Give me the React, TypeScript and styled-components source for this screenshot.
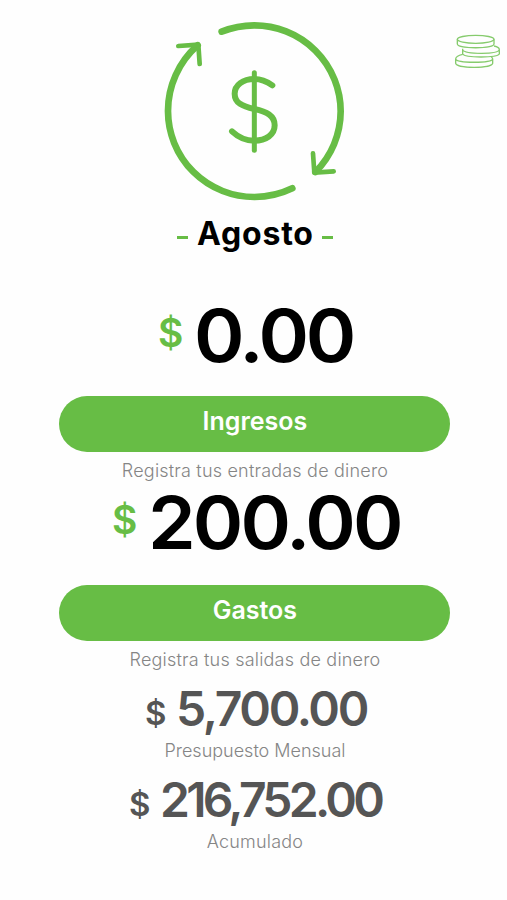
import React from "react";
import styled, { createGlobalStyle } from "styled-components";

const GREEN = "#67bd45";

const GlobalStyle = createGlobalStyle`
  * { box-sizing: border-box; }
  body {
    margin: 0;
    background: #fefefe;
    font-family: Inter, "Liberation Sans", sans-serif;
  }
`;

const Screen = styled.main`
  width: 507px;
  height: 900px;
  overflow: hidden;
  display: flex;
  flex-direction: column;
`;

const Header = styled.header`
  height: 210px;
  display: grid;
  grid-template-columns: 210px 67px;
  column-gap: 80px;
  padding: 10px 0 0 150px;
`;

const CycleIcon = styled.svg`
  width: 210px;
  height: 200px;
  fill: none;
  stroke: ${GREEN};
  stroke-linecap: round;
  stroke-linejoin: round;
`;

const CoinsIcon = styled.svg`
  width: 67px;
  height: 60px;
  margin-top: 10px;
  fill: none;
  stroke: #86cb6d;
  stroke-width: 4;
`;

const Month = styled.h1`
  margin: 0;
  height: 48px;
  padding: 0 0 0 3px;
  display: flex;
  justify-content: center;
  align-items: center;
  gap: 9px;
  font-size: 32px;
  font-weight: 700;
  line-height: 48px;
`;

const MonthName = styled.span`
  letter-spacing: 0.8px;
  margin-right: -0.8px;
`;

const Dash = styled.span`
  width: 11px;
  height: 3px;
  margin-top: 7px;
  background: ${GREEN};
`;

const Amount = styled.div<{ $small?: boolean; $top: number; $left: number }>`
  height: ${(p) => (p.$small ? 56 : 80)}px;
  margin-top: ${(p) => p.$top}px;
  padding-left: ${(p) => p.$left}px;
  display: flex;
  align-items: center;
  color: ${(p) => (p.$small ? "#555" : "#000")};
`;

const Currency = styled.span<{ $small?: boolean }>`
  width: ${(p) => (p.$small ? 31 : 36)}px;
  color: ${(p) => (p.$small ? "#555" : GREEN)};
  font-size: ${(p) => (p.$small ? 33 : 39)}px;
  font-weight: 600;
  line-height: 1;
  margin-left: -1px;
  margin-top: ${(p) => (p.$small ? 7 : -8)}px;
`;

const Value = styled.span<{ $small?: boolean; $spacing: number }>`
  font-size: ${(p) => (p.$small ? 48 : 73)}px;
  font-weight: 600;
  line-height: 0.8;
  white-space: nowrap;
  letter-spacing: ${(p) => p.$spacing}px;
  transform: scaleX(${(p) => (p.$small ? 1 : 1.05)});
  transform-origin: left center;
`;

const Action = styled.button<{ $top: number; $lift?: number }>`
  width: 391px;
  height: 56px;
  flex-shrink: 0;
  margin: ${(p) => p.$top}px 0 0 59.4px;
  padding: 0 0 ${(p) => 5 + (p.$lift ?? 0)}px;
  border: 0;
  border-radius: 28px;
  background: ${GREEN};
  color: #fff;
  font: 600 25px/51px Inter, "Liberation Sans", sans-serif;
`;

const Caption = styled.p<{ $top: number; $spacing?: number }>`
  height: 24px;
  margin: ${(p) => p.$top}px 0 0;
  padding-left: 3px;
  text-align: center;
  color: #858585;
  font-size: 18px;
  font-weight: 300;
  line-height: 24px;
  letter-spacing: ${(p) => p.$spacing ?? 0}px;
`;

export default function App() {
  return (
    <Screen>
      <GlobalStyle />
      <Header>
        <CycleIcon viewBox="0 0 630 600" aria-hidden="true">
          <path strokeWidth="20" d="M215 65A259 258 0 0 1 313 46A259 258 0 0 1 572 304A259 258 0 0 1 496 486" />
          <path strokeWidth="20" d="M427 535A259 258 0 0 1 313 561A259 258 0 0 1 54 304A262 262 0 0 1 143 106" />
          <path strokeWidth="14" d="M85 108L145 104L149 162M489 430L493 488L551 484" />
          <path strokeWidth="15" d="M313 188V421" />
          <path strokeWidth="18" d="M367 226C350 214 334 207 313 207C279 207 254 225 254 251C254 279 277 289 313 297C350 305 374 317 374 346C374 374 348 392 313 392C286 392 264 381 246 364" />
        </CycleIcon>
        <CoinsIcon viewBox="0 0 201 180" aria-hidden="true">
          <ellipse cx="107" cy="58" rx="55" ry="12" />
          <path d="M52 58V72C54 87 160 87 162 72V58" />
          <path d="M162 78C172 80 178 84 178 89C174 104 76 103 68 90V86M68 90V102C76 114 170 114 178 102V89" />
          <path d="M68 103C55 106 47 111 47 117C51 130 154 130 158 117C158 115 157 113 154 111M47 117V130C51 146 154 146 158 130V117" />
        </CoinsIcon>
      </Header>
      <Month>
        <Dash />
        <MonthName>Agosto</MonthName>
        <Dash />
      </Month>
      <Amount $top={38} $left={159}>
        <Currency>$</Currency>
        <Value $spacing={-3}>0.00</Value>
      </Amount>
      <Action $top={19.5}>Ingresos</Action>
      <Caption $top={7} $spacing={0.2}>Registra tus entradas de dinero</Caption>
      <Amount $top={1} $left={113}>
        <Currency>$</Currency>
        <Value $spacing={-2.8}>200.00</Value>
      </Amount>
      <Action $top={21} $lift={2}>Gastos</Action>
      <Caption $top={7} $spacing={0.2}>Registra tus salidas de dinero</Caption>
      <Amount $small $top={10} $left={146}>
        <Currency $small>$</Currency>
        <Value $small $spacing={-2.3}>5,700.00</Value>
      </Amount>
      <Caption $top={1}>Presupuesto Mensual</Caption>
      <Amount $small $top={10} $left={130}>
        <Currency $small>$</Currency>
        <Value $small $spacing={-3.7}>216,752.00</Value>
      </Amount>
      <Caption $top={1} $spacing={0.2}>Acumulado</Caption>
    </Screen>
  );
}
